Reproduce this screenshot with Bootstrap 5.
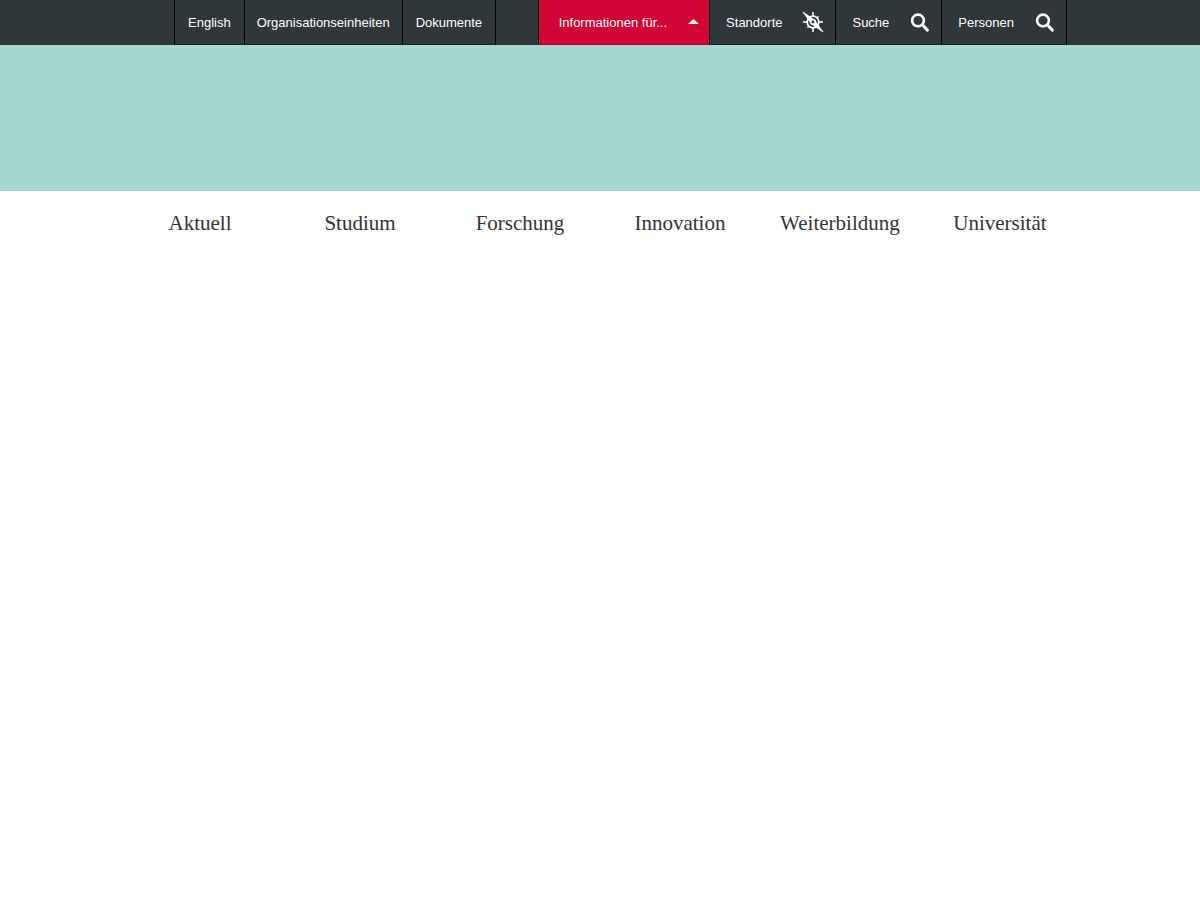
<!DOCTYPE html>
<html lang="de">
<head>
<meta charset="utf-8">
<meta name="viewport" content="width=device-width, initial-scale=1">
<title>Universität</title>
<link href="https://cdn.jsdelivr.net/npm/bootstrap@5.3.0/dist/css/bootstrap.min.css" rel="stylesheet">
<script src="https://cdn.jsdelivr.net/npm/bootstrap@5.3.0/dist/js/bootstrap.bundle.min.js" defer></script>
<style>
  body { font-family: "Liberation Sans", Arial, sans-serif; font-size: 13px; line-height: 20px; background: #fff; color: #2f373b; }
  .page-width { max-width: 960px; }
  .meta-bar { background: #2f373a; }
  .meta-inner { padding-left: 54px; padding-right: 13px; }
  .meta-item { padding: 13px 13px 11px; color: #fff; font-size: 13px; line-height: 20px; border: 0; border-right: 1px solid #000; border-bottom: 1px solid #1c2225; background: transparent; text-decoration: none; white-space: nowrap; }
  .meta-item:first-child { border-left: 1px solid #000; }
  .meta-wide { padding-left: 12px; padding-right: 12px; }
  .meta-tool { display: flex; align-items: center; gap: 21px; padding: 13px 12px 11px 16px; }
  .meta-active { background: #d10536; border-bottom-color: #a5042c; padding-left: 20px; padding-right: 10px; }
  .meta-tool svg { display: block; fill: none; stroke: #fff; overflow: visible; }
  .banner { background: #a6d7d2; min-height: 146px; }
  .main-link { display: block; padding: 17px 0; color: #333; font-family: "Liberation Serif", "Times New Roman", serif; font-size: 21px; line-height: 30px; text-decoration: none; text-align: center; }
</style>
</head>
<body>
<header>
  <nav class="meta-bar" aria-label="Metanavigation">
    <div class="page-width meta-inner mx-auto d-flex flex-wrap justify-content-between">
      <div class="d-flex flex-wrap">
        <a class="meta-item" href="#">English</a>
        <a class="meta-item meta-wide" href="#">Organisationseinheiten</a>
        <a class="meta-item" href="#">Dokumente</a>
      </div>
      <div class="d-flex flex-wrap">
        <button type="button" class="meta-item meta-tool meta-active" aria-expanded="true">Informationen für...
          <svg width="11" height="8" viewBox="0 0 11 8" aria-hidden="true"><path d="M0 5 5.500 0 11 5Z" fill="#fff" stroke="none"/></svg>
        </button>
        <a class="meta-item meta-tool" href="#">Standorte
          <svg width="20" height="20" viewBox="0 0 20 20" aria-hidden="true">
            <circle cx="10" cy="9" r="5.800" stroke-width="1.700"/>
            <path d="M10 -1V3.500M10 14.500V19M0 9H4.500M15.500 9H20M14 5 15.500 3.500M6 13 4.500 14.500" stroke-width="1.500"/>
            <path d="M0 -1 11.800 7.200 20 19 8.200 10.800Z" fill="#fff" stroke="#fff" stroke-width=".8"/>
            <circle cx="10" cy="9" r="2.200" fill="#2f373a" stroke-width="1.500"/>
          </svg>
        </a>
        <button type="button" class="meta-item meta-tool">Suche
          <svg width="19" height="20" viewBox="0 0 19 20" aria-hidden="true"><circle cx="8" cy="7.500" r="5.900" stroke-width="2.600"/><path d="M12.500 12 17.300 17" stroke-width="3.200" stroke-linecap="round"/></svg>
        </button>
        <button type="button" class="meta-item meta-tool">Personen
          <svg width="19" height="20" viewBox="0 0 19 20" aria-hidden="true"><circle cx="8" cy="7.500" r="5.900" stroke-width="2.600"/><path d="M12.500 12 17.300 17" stroke-width="3.200" stroke-linecap="round"/></svg>
        </button>
      </div>
    </div>
  </nav>
  <div class="banner"></div>
  <nav class="page-width mx-auto" aria-label="Hauptnavigation">
    <div class="row g-0 row-cols-2 row-cols-md-6">
      <div class="col"><a class="main-link" href="#">Aktuell</a></div>
      <div class="col"><a class="main-link" href="#">Studium</a></div>
      <div class="col"><a class="main-link" href="#">Forschung</a></div>
      <div class="col"><a class="main-link" href="#">Innovation</a></div>
      <div class="col"><a class="main-link" href="#">Weiterbildung</a></div>
      <div class="col"><a class="main-link" href="#">Universität</a></div>
    </div>
  </nav>
</header>
</body>
</html>
